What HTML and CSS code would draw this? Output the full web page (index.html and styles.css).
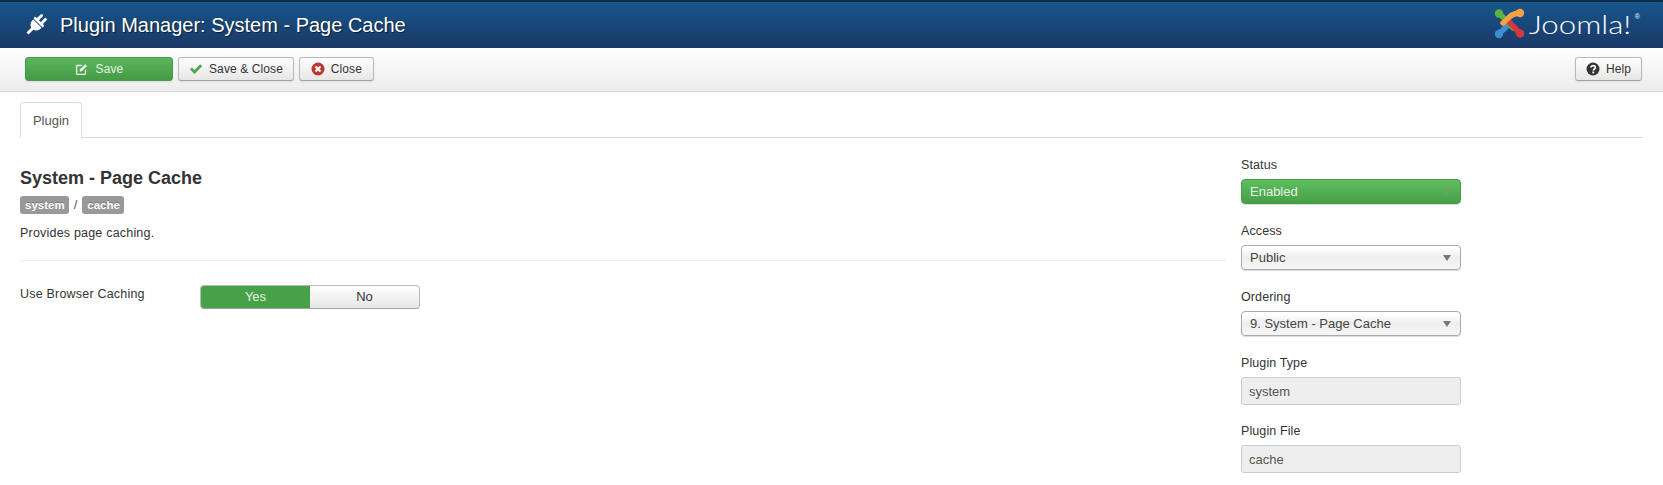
FILE: index.html
```html
<!DOCTYPE html>
<html lang="en">
<head>
<meta charset="utf-8">
<title>Plugin Manager: System - Page Cache</title>
<link rel="stylesheet" href="styles.css">
</head>
<body>
<header class="topbar">
  <div class="title-wrap">
    <svg class="plug" viewBox="0 0 24 24" width="24" height="24"><g transform="rotate(45 12 12)" fill="#fff"><rect x="7.800" y="0" width="2.900" height="8" rx="1.200"/><rect x="13.300" y="0" width="2.900" height="8" rx="1.200"/><rect x="5.500" y="6.500" width="13" height="2.600" rx=".8"/><path d="M6.200 10h11.600v1.500c0 3-2.200 5.300-4.300 5.800V24h-3v-6.700c-2.100-.5-4.300-2.800-4.300-5.800z"/></g></svg>
    <h1 class="page-title">Plugin Manager: System - Page Cache</h1>
  </div>
  <div class="brand">
    <svg class="brand-mark" viewBox="0 0 31 31" width="31" height="31" fill="none" stroke-width="5.500" stroke-linecap="round" stroke-linejoin="round">
      <path d="M5 25.500L9 22l7-7" stroke="#3d8fd1"/>
      <circle cx="5" cy="26" r="4.200" fill="#3d8fd1"/>
      <path d="M5.500 6L10 10l9 10" stroke="#5bb43d"/>
      <circle cx="5" cy="5.500" r="4.200" fill="#5bb43d"/>
      <path d="M25.500 25.500L22 21l-8-8" stroke="#d8363a"/>
      <circle cx="26" cy="25.500" r="4.200" fill="#d8363a"/>
      <path d="M9 15l7-6.500c3-3 6-3 9-3.500" stroke="#f5a247"/>
      <circle cx="26" cy="5" r="4.200" fill="#f5a247"/>
    </svg>
    <span class="brand-name">Joomla!</span><span class="brand-reg">®</span>
  </div>
</header>

<nav class="toolbar">
  <div class="toolbar-left">
    <button class="btn btn-save" type="button">
      <svg class="ico" viewBox="0 0 14 14" width="13" height="13"><path d="M2.500 2H8L6.500 3.500H2.500v8h8V8L12 6.500v5.200c0 .8-.7 1.300-1.300 1.300H2.300C1.600 13 1 12.400 1 11.700V3.300C1 2.600 1.700 2 2.500 2z" fill="#e4f2e4"/><path d="M5.500 6.800L11 1.300l2 2-5.500 5.500-2.500.5z" fill="#e4f2e4"/></svg>
      Save
    </button>
    <button class="btn" type="button">
      <svg class="ico" viewBox="0 0 14 14" width="14" height="14"><path d="M1 7.500l2-2L5.500 8l5.700-5.800 2 2-7.700 7.800z" fill="#51a351"/></svg>
      Save &amp; Close
    </button>
    <button class="btn btn-close" type="button">
      <svg class="ico" viewBox="0 0 14 14" width="14" height="14"><circle cx="7" cy="7" r="6.500" fill="#bd362f"/><path d="M4.500 4.500l5 5M9.500 4.500l-5 5" stroke="#fff" stroke-width="2.200"/></svg>
      Close
    </button>
  </div>
  <button class="btn" type="button">
    <svg class="ico" viewBox="0 0 14 14" width="14" height="14"><circle cx="7" cy="7" r="6.500" fill="#333"/><path d="M4.800 5.500C5 4.200 6 3.700 7.100 3.700c1.300 0 2.200.8 2.200 1.900 0 1.700-2 1.600-2 3" fill="none" stroke="#fff" stroke-width="1.700"/><rect x="6.300" y="9.500" width="1.900" height="1.800" fill="#fff"/></svg>
    Help
  </button>
</nav>

<main class="content">
  <div class="tabs"><a class="tab" href="#">Plugin</a></div>
  <div class="columns">
    <section class="main-col">
      <h2 class="plugin-title">System - Page Cache</h2>
      <p class="crumbs"><span class="tag">system</span> / <span class="tag">cache</span></p>
      <p class="desc">Provides page caching.</p>
      <hr class="rule">
      <div class="option">
        <span class="option-label">Use Browser Caching</span>
        <div class="toggle">
          <span class="toggle-item toggle-on">Yes</span>
          <span class="toggle-item">No</span>
        </div>
      </div>
    </section>
    <aside class="side-col">
      <label class="field-label">Status</label>
      <div class="select select-green"><span>Enabled</span><i class="caret"></i></div>
      <label class="field-label">Access</label>
      <div class="select"><span>Public</span><i class="caret"></i></div>
      <label class="field-label">Ordering</label>
      <div class="select"><span>9. System - Page Cache</span><i class="caret"></i></div>
      <label class="field-label">Plugin Type</label>
      <div class="readonly">system</div>
      <label class="field-label">Plugin File</label>
      <div class="readonly">cache</div>
    </aside>
  </div>
</main>
</body>
</html>
```

FILE: styles.css
```css
* { box-sizing: border-box; }
html, body { margin: 0; padding: 0; }
body {
  font-family: "Liberation Sans", Arial, sans-serif;
  font-size: 13px;
  line-height: 18px;
  color: #333;
  background: #fff;
  height: 485px;
  overflow: hidden;
}
.topbar {
  height: 48px;
  display: flex;
  align-items: center;
  justify-content: space-between;
  padding: 0 23px 0 24px;
  border-top: 2px solid #0f2a48;
  background: linear-gradient(#17568c, #1a3867);
}
.title-wrap { display: flex; align-items: center; gap: 12px; margin-top: -1px; }
.plug { display: block; }
.page-title {
  margin: 0;
  font-size: 20px;
  line-height: 24px;
  font-weight: 400;
  color: #fff;
  text-shadow: 1px 1px 1px rgba(0,0,0,.5);
}
.brand { display: flex; align-items: center; margin-top: -3px; }
.brand-mark { display: block; margin-right: 4px; }
.brand-name {
  display: block;
  width: 106px;
  font-family: "Lato", sans-serif;
  font-weight: 300;
  font-size: 26px;
  line-height: 30px;
  color: #fff;
  transform: scaleX(1.2);
  transform-origin: left center;
}
.brand-reg { font-size: 7px; line-height: 8px; color: #fff; align-self: flex-start; margin-top: 5px; }
.toolbar {
  height: 44px;
  display: flex;
  justify-content: space-between;
  align-items: flex-start;
  padding: 9px 21px 0 25px;
  border-bottom: 1px solid #d4d4d4;
  background: linear-gradient(#fff, #ececec);
}
.toolbar-left { display: flex; gap: 5px; }
.btn {
  height: 24px;
  display: inline-flex;
  align-items: center;
  justify-content: center;
  gap: 6px;
  padding: 0 10px;
  font-family: inherit;
  font-size: 12px;
  line-height: 18px;
  color: #333;
  letter-spacing: .1px;
  border: 1px solid #b9b9b9;
  border-bottom-color: #a2a2a2;
  border-radius: 3px;
  background: linear-gradient(#fff, #e6e6e6);
  box-shadow: 0 1px 2px rgba(0,0,0,.08);
}
.btn-save {
  width: 148px;
  color: #e4f2e4;
  border-color: #4a9a4a;
  background: linear-gradient(#5bb75b, #469a46);
  gap: 8px;
}
.btn-close { width: 75px; }
.ico { display: block; flex: none; }
.content { padding: 10px 20px 0 20px; }
.tabs { height: 36px; border-bottom: 1px solid #ddd; }
.tab {
  display: block;
  width: 62px;
  height: 36px;
  text-align: center;
  line-height: 35px;
  color: #555;
  font-size: 13px;
  text-decoration: none;
  background: #fff;
  border: 1px solid #ddd;
  border-bottom-color: #fff;
  border-radius: 4px 4px 0 0;
}
.columns { display: flex; gap: 15px; align-items: flex-start; }
.main-col { width: 1206px; padding-top: 29px; }
.plugin-title {
  margin: 0;
  font-size: 18px;
  line-height: 22px;
  font-weight: 700;
  color: #333;
}
.crumbs { margin: 7px 0 0; height: 18px; line-height: 18px; display: flex; gap: 5px; color: #555; }
.tag {
  display: block;
  height: 18px;
  padding: 0 4px 0 5px;
  font-size: 11.5px;
  line-height: 18px;
  font-weight: 700;
  color: #fff;
  background: #999;
  border-radius: 3px;
  text-shadow: 0 -1px 0 rgba(0,0,0,.25);
}
.desc { margin: 10px 0 0; line-height: 18px; font-size: 12.5px; letter-spacing: .2px; }
.rule { margin: 18px 0 0; border: 0; border-top: 1px solid #eee; }
.option { display: flex; margin-top: 24px; }
.option-label { width: 180px; font-size: 12.5px; line-height: 18px; letter-spacing: .2px; }
.toggle {
  width: 220px;
  height: 24px;
  display: flex;
  border: 1px solid #bbb;
  border-bottom-color: #a2a2a2;
  border-radius: 4px;
  overflow: hidden;
  background: linear-gradient(#fff, #e6e6e6);
}
.toggle-item { flex: 1; text-align: center; line-height: 22px; font-size: 13px; color: #333; }
.toggle-on { background: #47a147; color: #e4f2e4; }
.side-col { width: 220px; padding-top: 18px; }
.field-label { display: block; height: 18px; line-height: 18px; font-size: 12.5px; letter-spacing: .1px; margin-bottom: 5px; }
.select {
  height: 25px;
  display: flex;
  align-items: center;
  justify-content: space-between;
  padding: 0 9px 0 8px;
  margin-bottom: 18px;
  font-size: 13px;
  color: #444;
  border: 1px solid #aaa;
  border-radius: 4px;
  background: linear-gradient(#fff 10%, #eee 50%, #f6f6f6);
  box-shadow: 0 1px 1px rgba(0,0,0,.15);
}
.select-green {
  color: #e4f2e4;
  border-color: #4a9a4a;
  background: linear-gradient(#5fbd5f, #47a047);
}
.caret { width: 0; height: 0; border-style: solid; border-width: 6px 4px 0; border-color: #777 transparent transparent; }
.select-green .caret { border-top-color: #6f9f6f; }
.readonly {
  height: 28px;
  padding: 0 7px;
  line-height: 27px;
  font-size: 13px;
  color: #555;
  background: #eee;
  border: 1px solid #ccc;
  border-radius: 3px;
  margin-bottom: 17px;
}
```
